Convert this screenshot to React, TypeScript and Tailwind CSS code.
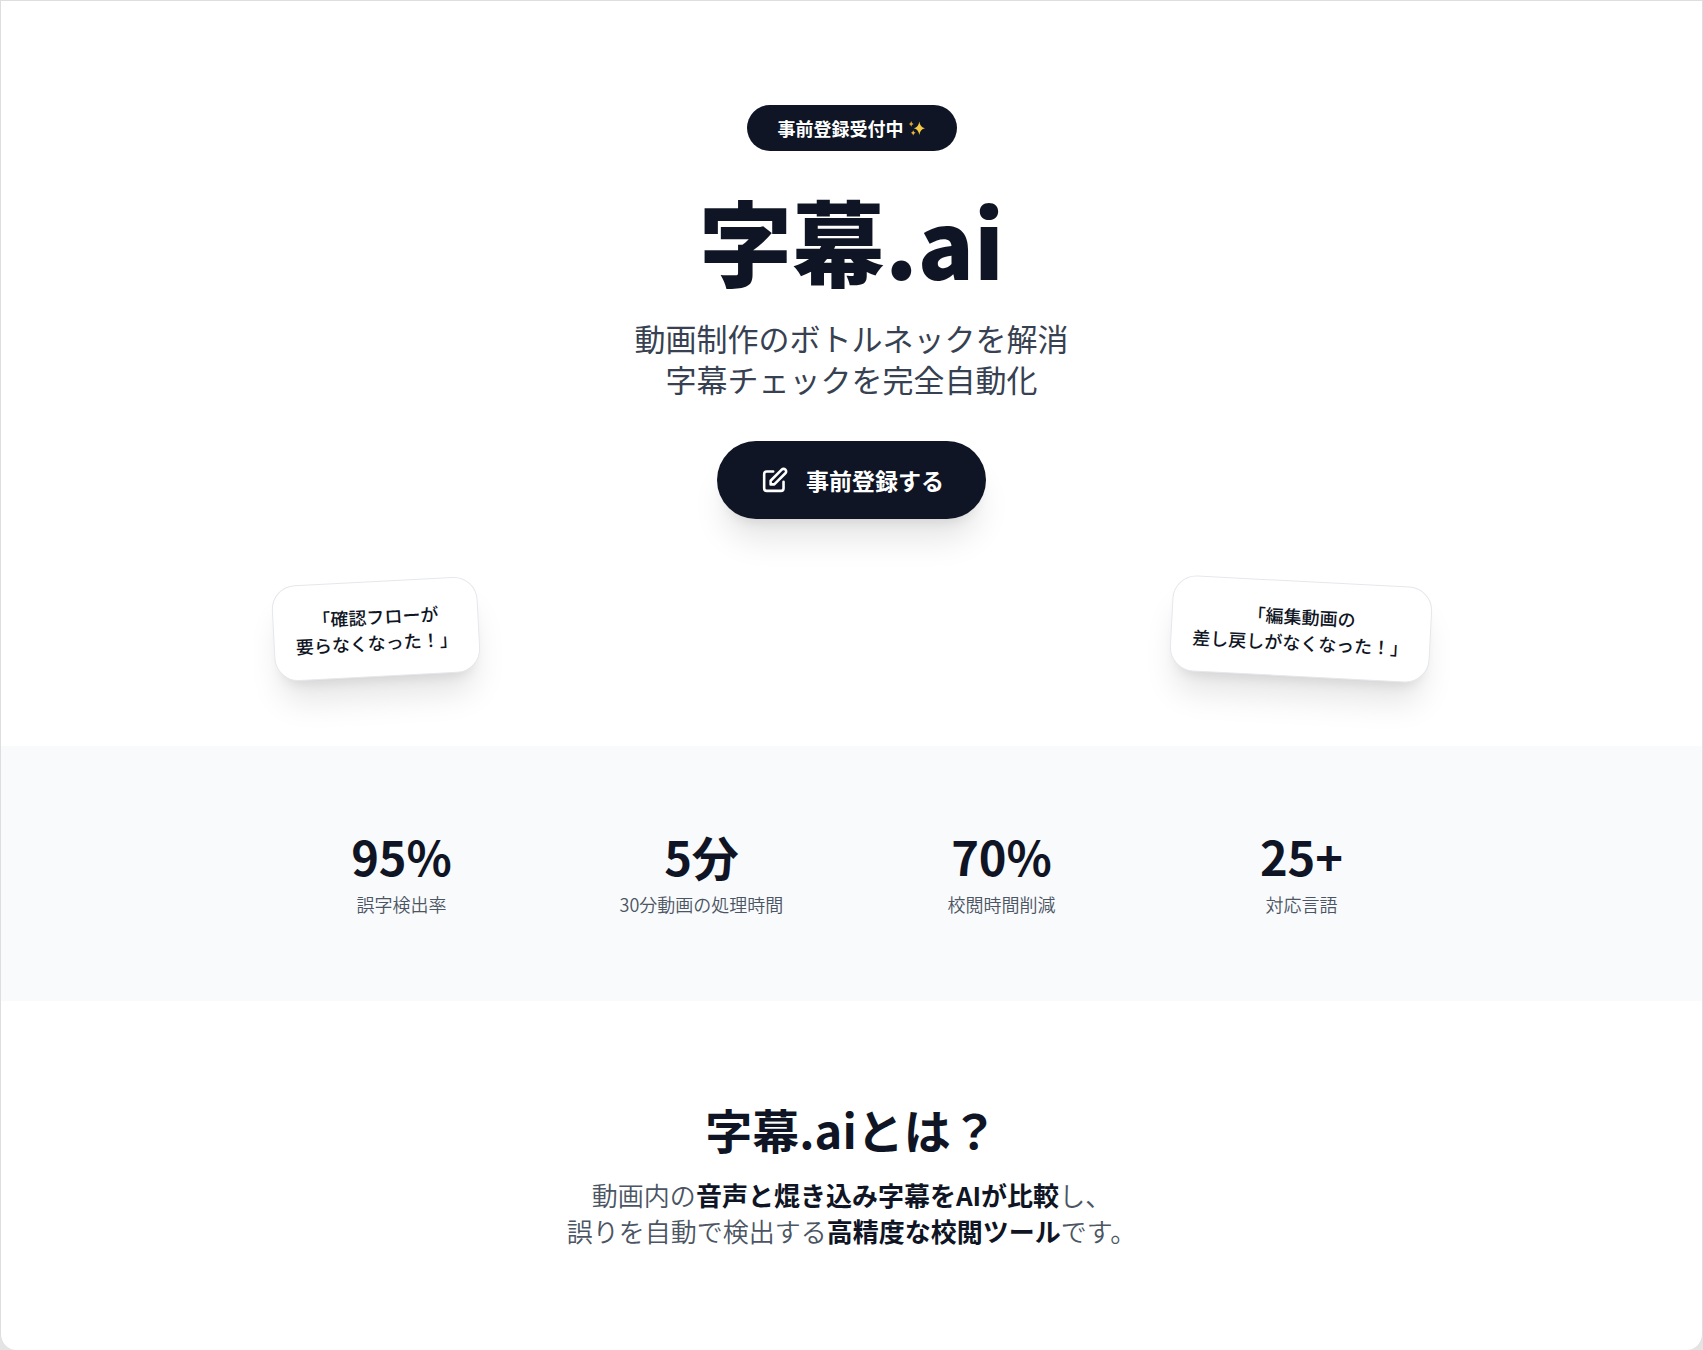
const stats = [
  { value: '95%', label: '誤字検出率' },
  { value: '5分', label: '30分動画の処理時間' },
  { value: '70%', label: '校閲時間削減' },
  { value: '25+', label: '対応言語' },
]

function Sparkles() {
  return (
    <svg className="w-[18px] h-[18px]" viewBox="0 0 18 18" fill="none" aria-hidden="true">
      <path
        d="M11.3 2.4 Q12 8 17 9.2 Q12 10.4 11.3 16 Q10.6 10.4 5.8 9.2 Q10.6 8 11.3 2.4Z"
        fill="#f6c944"
      />
      <path d="M3.2 2 Q3.6 4.4 5.6 4.9 Q3.6 5.4 3.2 7.8 Q2.8 5.4 1 4.9 Q2.8 4.4 3.2 2Z" fill="#e0a63a" />
      <path
        d="M5.2 11.2 Q5.6 13.2 7.6 13.7 Q5.6 14.2 5.2 16.4 Q4.8 14.2 3 13.7 Q4.8 13.2 5.2 11.2Z"
        fill="#f0b93e"
      />
    </svg>
  )
}

function PencilIcon() {
  return (
    <svg
      className="w-[31px] h-[31px]"
      viewBox="0 0 24 24"
      fill="none"
      stroke="currentColor"
      strokeWidth={2}
      strokeLinecap="round"
      strokeLinejoin="round"
      aria-hidden="true"
    >
      <path d="M11 5H6a2 2 0 00-2 2v11a2 2 0 002 2h11a2 2 0 002-2v-5m-1.414-9.414a2 2 0 112.828 2.828L11.828 15H9v-2.828l8.586-8.586z" />
    </svg>
  )
}

export default function App() {
  return (
    <div lang="ja" className="min-h-screen bg-[#e4e4e4] font-['Noto_Sans_CJK_JP',sans-serif] text-[#0f1524]">
      <div className="min-h-screen bg-white border-x border-t border-[#dedede] rounded-b-2xl">
        {/* Hero */}
        <section className="pt-26 pb-[69px] px-6 flex flex-col items-center text-center">
          <div className="h-[46px] px-[31px] flex items-center gap-1 rounded-full bg-[#0f1524] text-white text-[18px] font-bold">
            <span>事前登録受付中</span>
            <Sparkles />
          </div>

          <h1 className="mt-[42px] text-[93px] leading-[93px] font-black">字幕.ai</h1>

          <p className="mt-[31px] text-[31px] leading-[41px] text-[#374151]">
            動画制作のボトルネックを解消
            <br />
            字幕チェックを完全自動化
          </p>

          <button
            type="button"
            className="mt-[42px] h-[78px] px-[42px] flex items-center gap-4 rounded-full bg-[#0f1524] text-white text-[23px] font-bold shadow-[0_26px_32px_-6px_rgba(0,0,0,0.1),0_10px_13px_-8px_rgba(0,0,0,0.1)]"
          >
            <PencilIcon />
            事前登録する
          </button>

          {/* Voices */}
          <div className="mt-[62px] w-full max-w-[1158px] flex justify-between text-[18px] leading-[26px] font-medium">
            <div className="p-[21px] bg-white border border-gray-200 rounded-3xl shadow-[0_26px_32px_-6px_rgba(0,0,0,0.1),0_10px_13px_-8px_rgba(0,0,0,0.1)] -rotate-3">
              「確認フローが
              <br />
              要らなくなった！」
            </div>
            <div className="p-[21px] bg-white border border-gray-200 rounded-3xl shadow-[0_26px_32px_-6px_rgba(0,0,0,0.1),0_10px_13px_-8px_rgba(0,0,0,0.1)] rotate-3">
              「編集動画の
              <br />
              差し戻しがなくなった！」
            </div>
          </div>
        </section>

        {/* Stats */}
        <section className="bg-[#f9fafc] pt-20 pb-[84px] px-6">
          <div className="max-w-[1158px] mx-auto grid grid-cols-4 gap-[42px] text-center">
            {stats.map((stat) => (
              <div key={stat.label}>
                <div className="text-[47px] leading-[60px] font-bold">{stat.value}</div>
                <div className="mt-[5px] text-[18px] leading-[26px] font-[350] text-[#4b5563]">{stat.label}</div>
              </div>
            ))}
          </div>
        </section>

        {/* About */}
        <section className="pt-[102px] pb-20 px-6 text-center">
          <h2 className="text-[47px] leading-[52px] font-bold">字幕.aiとは？</h2>
          <p className="mt-[22px] text-[26px] leading-[36px] font-[350] text-[#4b5563]">
            動画内の<strong className="font-bold text-[#0f1524]">音声と焜き込み字幕をAIが比較</strong>し、
            <br />
            誤りを自動で検出する<strong className="font-bold text-[#0f1524]">高精度な校閲ツール</strong>です。
          </p>
        </section>
      </div>
    </div>
  )
}
